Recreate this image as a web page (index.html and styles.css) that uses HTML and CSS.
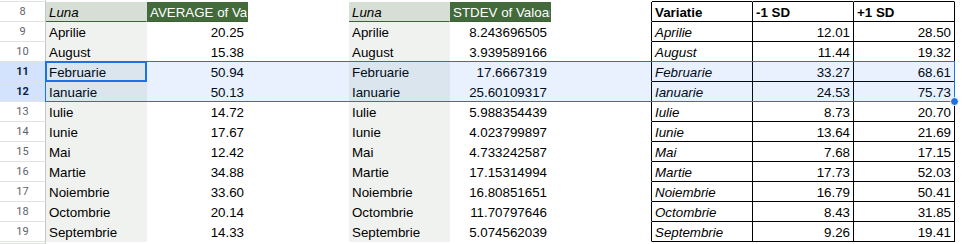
FILE: index.html
```html
<!DOCTYPE html>
<html>
<head>
<meta charset="utf-8">
<link rel="stylesheet" href="styles.css">
</head>
<body>
<div class="sheet">
  <div class="row part">
    <div class="rh"></div><div class="c"></div><div class="c"></div><div class="c"></div><div class="c"></div><div class="c"></div><div class="c"></div><div class="c tb"></div><div class="c tb"></div><div class="c tb"></div>
  </div>
  <div class="row">
    <div class="rh">8</div><div class="c ph1">Luna</div><div class="c ph2">AVERAGE of Valoare</div><div class="c"></div><div class="c ph1">Luna</div><div class="c ph2">STDEV of Valoare</div><div class="c tl"></div><div class="c t b">Variatie</div><div class="c t b">-1 SD</div><div class="c t b">+1 SD</div>
  </div>
  <div class="row">
    <div class="rh">9</div><div class="c g">Aprilie</div><div class="c n">20.25</div><div class="c"></div><div class="c g">Aprilie</div><div class="c n">8.243696505</div><div class="c tl"></div><div class="c t i">Aprilie</div><div class="c t n">12.01</div><div class="c t n">28.50</div>
  </div>
  <div class="row">
    <div class="rh">10</div><div class="c g">August</div><div class="c n">15.38</div><div class="c"></div><div class="c g">August</div><div class="c n">3.939589166</div><div class="c tl"></div><div class="c t i">August</div><div class="c t n">11.44</div><div class="c t n">19.32</div>
  </div>
  <div class="row">
    <div class="rh sel-h">11</div><div class="c g">Februarie</div><div class="c n">50.94</div><div class="c"></div><div class="c g">Februarie</div><div class="c n">17.6667319</div><div class="c tl"></div><div class="c t i">Februarie</div><div class="c t n">33.27</div><div class="c t n">68.61</div>
  </div>
  <div class="row">
    <div class="rh sel-h">12</div><div class="c g">Ianuarie</div><div class="c n">50.13</div><div class="c"></div><div class="c g">Ianuarie</div><div class="c n">25.60109317</div><div class="c tl"></div><div class="c t i">Ianuarie</div><div class="c t n">24.53</div><div class="c t n">75.73</div>
  </div>
  <div class="row">
    <div class="rh">13</div><div class="c g">Iulie</div><div class="c n">14.72</div><div class="c"></div><div class="c g">Iulie</div><div class="c n">5.988354439</div><div class="c tl"></div><div class="c t i">Iulie</div><div class="c t n">8.73</div><div class="c t n">20.70</div>
  </div>
  <div class="row">
    <div class="rh">14</div><div class="c g">Iunie</div><div class="c n">17.67</div><div class="c"></div><div class="c g">Iunie</div><div class="c n">4.023799897</div><div class="c tl"></div><div class="c t i">Iunie</div><div class="c t n">13.64</div><div class="c t n">21.69</div>
  </div>
  <div class="row">
    <div class="rh">15</div><div class="c g">Mai</div><div class="c n">12.42</div><div class="c"></div><div class="c g">Mai</div><div class="c n">4.733242587</div><div class="c tl"></div><div class="c t i">Mai</div><div class="c t n">7.68</div><div class="c t n">17.15</div>
  </div>
  <div class="row">
    <div class="rh">16</div><div class="c g">Martie</div><div class="c n">34.88</div><div class="c"></div><div class="c g">Martie</div><div class="c n">17.15314994</div><div class="c tl"></div><div class="c t i">Martie</div><div class="c t n">17.73</div><div class="c t n">52.03</div>
  </div>
  <div class="row">
    <div class="rh">17</div><div class="c g">Noiembrie</div><div class="c n">33.60</div><div class="c"></div><div class="c g">Noiembrie</div><div class="c n">16.80851651</div><div class="c tl"></div><div class="c t i">Noiembrie</div><div class="c t n">16.79</div><div class="c t n">50.41</div>
  </div>
  <div class="row">
    <div class="rh">18</div><div class="c g">Octombrie</div><div class="c n">20.14</div><div class="c"></div><div class="c g">Octombrie</div><div class="c n">11.70797646</div><div class="c tl"></div><div class="c t i">Octombrie</div><div class="c t n">8.43</div><div class="c t n">31.85</div>
  </div>
  <div class="row">
    <div class="rh">19</div><div class="c g">Septembrie</div><div class="c n">14.33</div><div class="c"></div><div class="c g">Septembrie</div><div class="c n">5.074562039</div><div class="c tl"></div><div class="c t i">Septembrie</div><div class="c t n">9.26</div><div class="c t n">19.41</div>
  </div>
  <div class="row part">
    <div class="rh"></div><div class="c"></div><div class="c"></div><div class="c"></div><div class="c"></div><div class="c"></div><div class="c"></div><div class="c"></div><div class="c"></div><div class="c"></div>
  </div>
  <div class="selection"></div>
  <div class="active"></div>
  <div class="handle"></div>
</div>
</body>
</html>
```
FILE: styles.css
```css
html, body {
  margin: 0;
  padding: 0;
  background: #ffffff;
}
.sheet {
  position: relative;
  width: 962px;
  height: 244px;
  overflow: hidden;
  font-family: "Liberation Sans", Arial, sans-serif;
  font-size: 13.33px;
  color: #000000;
}
.row {
  display: grid;
  grid-template-columns: 46px repeat(9, 101px);
  height: 20px;
}
.row.part {
  height: 2px;
}
.rh {
  box-sizing: border-box;
  border-right: 1px solid #c4c7c5;
  border-bottom: 1px solid #e1e3e1;
  font-family: Roboto, "Liberation Sans", sans-serif;
  font-size: 11px;
  line-height: 19px;
  text-align: center;
  color: #5f6368;
  background: #ffffff;
  overflow: hidden;
}
.rh.sel-h {
  background: #d3e3fd;
  color: #0b1f3f;
  font-weight: bold;
}
.c {
  box-sizing: border-box;
  border-right: 1px solid transparent;
  border-bottom: 1px solid transparent;
  padding: 3px 3px 0 3px;
  line-height: 16px;
  white-space: nowrap;
  overflow: hidden;
}
.part .c {
  padding: 0;
}
.g {
  background: #f0f2ef;
}
.n {
  text-align: right;
}
.i {
  font-style: italic;
}
.b {
  font-weight: bold;
}
.ph1 {
  background: #d7ded5;
  font-style: italic;
  border-bottom-color: #3c6234;
}
.ph2 {
  background: #426a3a;
  color: #ffffff;
  border-bottom-color: #3c6234;
}
.t {
  border-right-color: #000000;
  border-bottom-color: #000000;
}
.tb {
  border-bottom-color: #000000;
}
.tl {
  border-right-color: #000000;
}
.selection {
  position: absolute;
  left: 45px;
  top: 61px;
  width: 910px;
  height: 41px;
  box-sizing: border-box;
  border: 1px solid #1a73e8;
  background: rgba(26, 115, 232, 0.1);
}
.active {
  position: absolute;
  left: 45px;
  top: 61px;
  width: 102px;
  height: 21px;
  box-sizing: border-box;
  border: 2px solid #1a73e8;
}
.handle {
  position: absolute;
  left: 950px;
  top: 97px;
  width: 9px;
  height: 9px;
  box-sizing: border-box;
  border-radius: 50%;
  background: #1a73e8;
  border: 1px solid #ffffff;
}
```
